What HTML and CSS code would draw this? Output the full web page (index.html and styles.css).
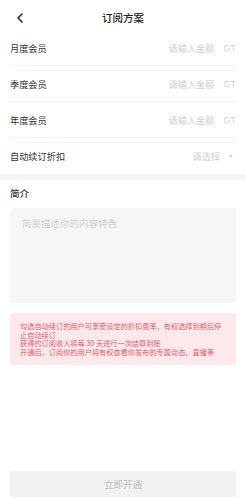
FILE: index.html
```html
<!DOCTYPE html>
<html lang="zh">
<head>
<meta charset="utf-8">
<title>订阅方案</title>
<link rel="stylesheet" href="styles.css">
</head>
<body>
<div class="page">
  <header class="header">
    <span class="back">
      <svg width="8" height="10" viewBox="0 0 8 10"><path d="M6 1 L2 5 L6 9" fill="none" stroke="#222" stroke-width="1.5" stroke-linecap="round" stroke-linejoin="round"/></svg>
    </span>
    <h1 class="title">订阅方案</h1>
  </header>
  <section class="form">
    <div class="row"><span class="label">月度会员</span><span class="value"><span class="ph">请输入金额</span><span class="unit">GT</span></span></div>
    <div class="row"><span class="label">季度会员</span><span class="value"><span class="ph">请输入金额</span><span class="unit">GT</span></span></div>
    <div class="row"><span class="label">年度会员</span><span class="value"><span class="ph">请输入金额</span><span class="unit">GT</span></span></div>
    <div class="row last"><span class="label">自动续订折扣</span><span class="value"><span class="ph">请选择</span><span class="caret"></span></span></div>
  </section>
  <div class="band"></div>
  <section class="intro">
    <h2 class="intro-title">简介</h2>
    <div class="textarea">简要描述你的内容特色</div>
    <div class="notice">勾选自动续订的用户可享受设定的折扣费率，有权选择到期后停止自动续订<br>获得的订阅收入将每 30 天进行一次结算到账<br>开通后，订阅你的用户将有权查看你发布的专属动态、直播等</div>
  </section>
  <div class="spacer"></div>
  <div class="footer"><button class="btn">立即开通</button></div>
</div>
</body>
</html>
```
FILE: styles.css
```css
* { box-sizing: border-box; margin: 0; padding: 0; }
html, body { background: #fff; }
body {
  font-family: "Noto Sans CJK SC", "Noto Sans", sans-serif;
  color: #333;
  width: 246px;
  height: 500px;
  overflow: hidden;
}
.page { display: flex; flex-direction: column; height: 500px; }
.header {
  height: 30px;
  display: flex;
  align-items: center;
  justify-content: center;
  position: relative;
  padding-top: 5px;
}
.back { position: absolute; left: 16px; top: 13px; display: flex; }
.title { font-size: 10.5px; font-weight: 500; color: #222; }
.form { padding: 0 10px; }
.row {
  height: 36px;
  display: flex;
  align-items: center;
  justify-content: space-between;
  border-bottom: 1px solid #f2f2f2;
  font-size: 9.2px;
}
.row.last { border-bottom: none; }
.label { color: #333; }
.value { display: flex; align-items: center; gap: 9px; color: #cfcfcf; }
.unit { color: #cfcfcf; font-family: "Liberation Sans", sans-serif; font-size: 9px; }
.caret {
  width: 0; height: 0;
  border-left: 2.5px solid transparent;
  border-right: 2.5px solid transparent;
  border-top: 3px solid #c8c8c8;
  margin-right: 3px;
}
.band { height: 6px; background: #f6f6f6; }
.intro { padding: 0 10px; }
.intro-title { font-size: 9.5px; font-weight: 500; color: #333; height: 28px; display: flex; align-items: center; padding-bottom: 2px; }
.textarea {
  height: 95px;
  background: #f6f6f6;
  border-radius: 3px;
  font-size: 9.5px;
  color: #d0d0d0;
  padding: 8px 12px;
  line-height: 14px;
}
.notice {
  margin-top: 10px;
  background: #fde9eb;
  border-radius: 3px;
  color: #e0606e;
  font-size: 7.2px;
  line-height: 8.5px;
  padding: 9px 10px 9px 10px;
}
.spacer { flex: 1; }
.footer { padding: 0 10px 3px; }
.btn {
  width: 100%;
  height: 26px;
  border: none;
  border-radius: 3px;
  background: #f2f2f2;
  color: #bdbdbd;
  font-family: "Noto Sans CJK SC", sans-serif;
  font-size: 9.5px;
}
```
